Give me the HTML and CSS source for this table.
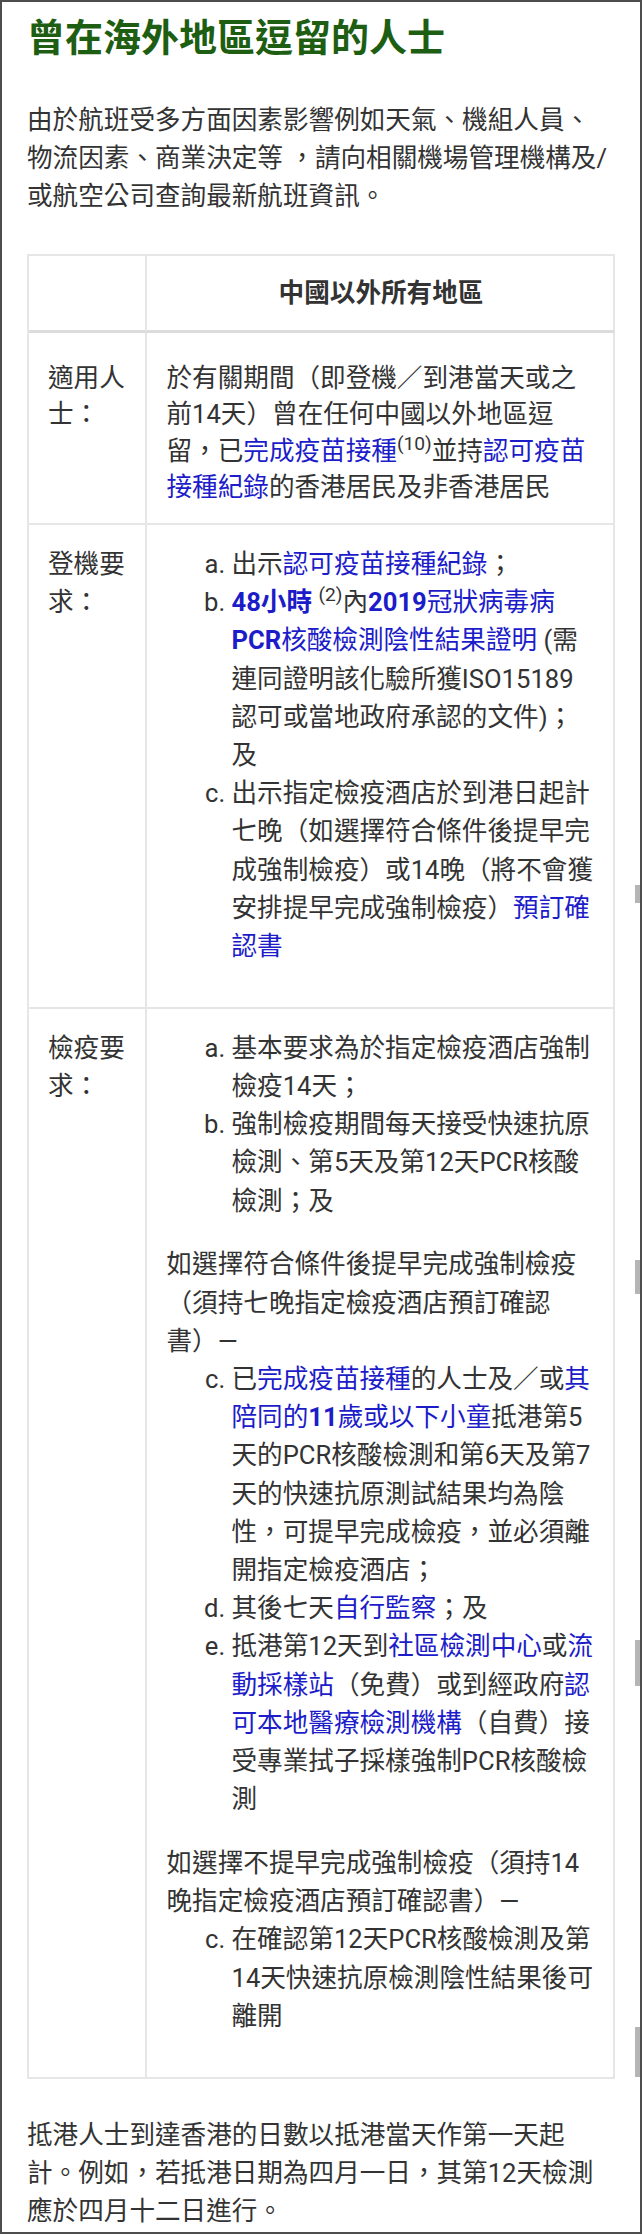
FILE: index.html
```html
<!DOCTYPE html>
<html lang="zh-Hant">
<head>
<meta charset="utf-8">
<title>曾在海外地區逗留的人士</title>
<link rel="stylesheet" href="styles.css">
</head>
<body>
<div class="page">
  <h1 class="title">曾在海外地區逗留的人士</h1>
  <p class="intro">由於航班受多方面因素影響例如天氣、機組人員、物流因素、商業決定等 ，請向相關機場管理機構及/或航空公司查詢最新航班資訊。</p>

  <table class="rules">
    <thead>
      <tr>
        <th class="label"></th>
        <th class="head">中國以外所有地區</th>
      </tr>
    </thead>
    <tbody>
      <tr class="first">
        <td class="label">適用人士：</td>
        <td class="body">於有關期間（即登機／到港當天或之前14天）曾在任何中國以外地區逗留，已<a href="#">完成疫苗接種</a><sup>(10)</sup>並持<a href="#">認可疫苗接種紀錄</a>的香港居民及非香港居民</td>
      </tr>
      <tr>
        <td class="label">登機要求：</td>
        <td class="body">
          <ol class="alpha">
            <li>出示<a href="#">認可疫苗接種紀錄</a>；</li>
            <li><a href="#"><b>48小時</b></a> <sup>(2)</sup>內<a href="#"><b>2019</b>冠狀病毒病<b>PCR</b>核酸檢測陰性結果證明</a> (需連同證明該化驗所獲ISO15189認可或當地政府承認的文件)；及</li>
            <li>出示指定檢疫酒店於到港日起計七晚（如選擇符合條件後提早完成強制檢疫）或14晚（將不會獲安排提早完成強制檢疫）<a href="#">預訂確認書</a></li>
          </ol>
        </td>
      </tr>
      <tr>
        <td class="label">檢疫要求：</td>
        <td class="body">
          <ol class="alpha">
            <li>基本要求為於指定檢疫酒店強制檢疫14天；</li>
            <li>強制檢疫期間每天接受快速抗原檢測、第5天及第12天PCR核酸檢測；及</li>
          </ol>
          <p class="note">如選擇符合條件後提早完成強制檢疫（須持七晚指定檢疫酒店預訂確認書）—</p>
          <ol class="alpha" start="3">
            <li>已<a href="#">完成疫苗接種</a>的人士及／或<a href="#">其陪同的<b>11</b>歲或以下小童</a>抵港第5天的PCR核酸檢測和第6天及第7天的快速抗原測試結果均為陰性，可提早完成檢疫，並必須離開指定檢疫酒店；</li>
            <li>其後七天<a href="#">自行監察</a>；及</li>
            <li>抵港第12天到<a href="#">社區檢測中心</a>或<a href="#">流動採樣站</a>（免費）或到經政府<a href="#">認可本地醫療檢測機構</a>（自費）接受專業拭子採樣強制PCR核酸檢測</li>
          </ol>
          <p class="note">如選擇不提早完成強制檢疫（須持14晚指定檢疫酒店預訂確認書）—</p>
          <ol class="alpha" start="3">
            <li>在確認第12天PCR核酸檢測及第14天快速抗原檢測陰性結果後可離開</li>
          </ol>
        </td>
      </tr>
    </tbody>
  </table>

  <p class="outro">抵港人士到達香港的日數以抵港當天作第一天起計。例如，若抵港日期為四月一日，其第12天檢測應於四月十二日進行。</p>

  <div class="scrollmark sm1"></div>
  <div class="scrollmark sm2"></div>
  <div class="scrollmark sm3"></div>
  <div class="scrollmark sm4"></div>
</div>
</body>
</html>
```
FILE: styles.css
```css
html, body {
  margin: 0;
  padding: 0;
  background: #fff;
}

.page {
  position: relative;
  box-sizing: border-box;
  width: 642px;
  height: 2234px;
  overflow: hidden;
  border: 2px solid #4d4d4d;
  padding: 12.5px 25px 0 25px;
  background: #fff;
  color: #333;
  font-family: Roboto, "Noto Sans CJK TC", "Noto Sans CJK SC", sans-serif;
  font-size: 25.6px;
  line-height: 38.2px;
  text-spacing-trim: space-all;
}

.title {
  margin: 0;
  font-size: 38px;
  line-height: 46px;
  font-weight: 700;
  color: #1d5e12;
}

.intro {
  margin: 40px 3px 0 0;
  line-height: 38.4px;
}

a {
  color: #1c1cc9;
  text-decoration: none;
}

b {
  font-weight: 700;
}

sup {
  font-size: 0.75em;
  line-height: 0;
  vertical-align: 0.5em;
}

.rules {
  margin-top: 38px;
  width: 588px;
  table-layout: fixed;
  border-collapse: separate;
  border-spacing: 0;
  border-top: 2px solid #e6e6e6;
  border-left: 2px solid #e6e6e6;
}

.rules th,
.rules td {
  border-right: 2px solid #e6e6e6;
  border-bottom: 2px solid #e6e6e6;
  vertical-align: top;
  text-align: left;
  font-weight: 400;
}

.rules th {
  padding: 18px 17.5px 18px 19.5px;
  border-bottom: 3px solid #dcdcdc;
}

.rules th.label {
  box-sizing: border-box;
  width: 118px;
}

.rules th.head {
  text-align: center;
  font-weight: 700;
}

.rules td {
  padding: 20px 17.5px 16px 19.5px;
}

.rules td.label {
  padding-left: 19px;
  padding-right: 17px;
}

.rules tr.first td {
  padding-top: 27px;
  padding-bottom: 17px;
  line-height: 36.5px;
}

.alpha {
  list-style-type: lower-alpha;
  margin: 0 0 25.6px 0;
  padding-left: 65px;
}

.note {
  margin: 0;
}

.outro {
  margin: 38.5px 3px 0 0;
  line-height: 37.8px;
}

.scrollmark {
  position: absolute;
  right: 0;
  width: 5px;
  background: #b5b5b5;
}

.sm1 { top: 883px; height: 18px; }
.sm2 { top: 1258px; height: 34px; }
.sm3 { top: 1638px; height: 46px; }
.sm4 { top: 2025px; height: 50px; }
```
